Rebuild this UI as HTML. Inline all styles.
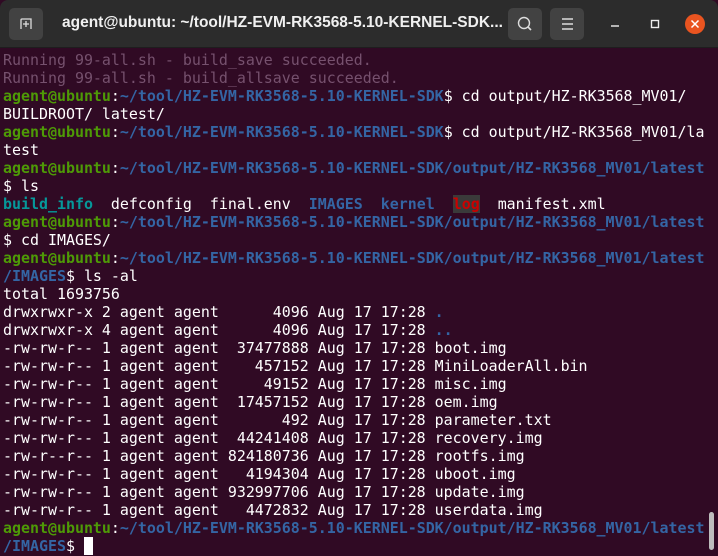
<!DOCTYPE html>
<html><head><meta charset="utf-8"><style>
*{margin:0;padding:0;box-sizing:border-box}
body{width:718px;height:556px;background:#300a24;overflow:hidden;position:relative;font-family:"Liberation Sans",sans-serif}
.tb{position:absolute;left:0;top:0;width:718px;height:48px;background:#2c2c2c;border-radius:8px 8px 0 0;border-bottom:1px solid #1e1e1e}
.btn{position:absolute;top:8px;width:34px;height:32px;background:#424242;border-radius:5px}
.title{position:absolute;left:62px;top:14px;color:#f0f0f0;font-weight:bold;font-size:15.5px;white-space:nowrap}
pre{position:absolute;left:3px;top:51px;font-family:"DejaVu Sans Mono","Liberation Mono",monospace;font-size:14.95px;line-height:18px;color:#fff}
.g{color:#4e9a06;font-weight:bold}.b{color:#3465a4;font-weight:bold}.d{color:#76516e}
.c{color:#06989a;font-weight:bold}.r{color:#cc0000;font-weight:bold;background:#3a3a3a}
.cur{background:#fff;color:#fff}
.sb{position:absolute;left:709px;top:512px;width:5px;height:38px;background:#bdbdbd;border-radius:3px}
</style></head><body>
<div class="tb">
<div class="btn" style="left:9px"><svg width="34" height="32"><path d="M12 21V12q0-1 1-1h9v10" fill="none" stroke="#ddd" stroke-width="1.3"/><path d="M17 13v6M14 16h6" stroke="#ddd" stroke-width="1.3"/></svg></div>
<div class="title">agent@ubuntu: ~/tool/HZ-EVM-RK3568-5.10-KERNEL-SDK...</div>
<div class="btn" style="left:508px"><svg width="34" height="32"><circle cx="16" cy="15" r="5.5" fill="none" stroke="#ddd" stroke-width="1.4"/><path d="M20 19l3 3" stroke="#ddd" stroke-width="1.6"/></svg></div>
<div class="btn" style="left:550px"><svg width="34" height="32"><path d="M12 11h11M12 16h11M12 21h11" stroke="#ddd" stroke-width="1.4"/></svg></div>
<svg style="position:absolute;left:600px;top:14px" width="118" height="22"><path d="M11 12h8" stroke="#eee" stroke-width="1.4"/><rect x="51.5" y="6.5" width="7" height="7" fill="none" stroke="#eee" stroke-width="1.4"/><circle cx="95" cy="10" r="10" fill="#e95420"/><path d="M91.5 6.5l7 7M98.5 6.5l-7 7" stroke="#fff" stroke-width="1.5"/></svg>
</div>
<pre><span class="d">Running 99-all.sh - build_save succeeded.
Running 99-all.sh - build_allsave succeeded.</span>
<span class="g">agent@ubuntu</span>:<span class="b">~/tool/HZ-EVM-RK3568-5.10-KERNEL-SDK</span>$ cd output/HZ-RK3568_MV01/
BUILDROOT/ latest/
<span class="g">agent@ubuntu</span>:<span class="b">~/tool/HZ-EVM-RK3568-5.10-KERNEL-SDK</span>$ cd output/HZ-RK3568_MV01/la
test
<span class="g">agent@ubuntu</span>:<span class="b">~/tool/HZ-EVM-RK3568-5.10-KERNEL-SDK/output/HZ-RK3568_MV01/latest</span>
$ ls
<span class="c">build_info</span>  defconfig  final.env  <span class="b">IMAGES</span>  <span class="b">kernel</span>  <span class="r">log</span>  manifest.xml
<span class="g">agent@ubuntu</span>:<span class="b">~/tool/HZ-EVM-RK3568-5.10-KERNEL-SDK/output/HZ-RK3568_MV01/latest</span>
$ cd IMAGES/
<span class="g">agent@ubuntu</span>:<span class="b">~/tool/HZ-EVM-RK3568-5.10-KERNEL-SDK/output/HZ-RK3568_MV01/latest</span>
<span class="b">/IMAGES</span>$ ls -al
total 1693756
drwxrwxr-x 2 agent agent      4096 Aug 17 17:28 <span class="b">.</span>
drwxrwxr-x 4 agent agent      4096 Aug 17 17:28 <span class="b">..</span>
-rw-rw-r-- 1 agent agent  37477888 Aug 17 17:28 boot.img
-rw-rw-r-- 1 agent agent    457152 Aug 17 17:28 MiniLoaderAll.bin
-rw-rw-r-- 1 agent agent     49152 Aug 17 17:28 misc.img
-rw-rw-r-- 1 agent agent  17457152 Aug 17 17:28 oem.img
-rw-rw-r-- 1 agent agent       492 Aug 17 17:28 parameter.txt
-rw-rw-r-- 1 agent agent  44241408 Aug 17 17:28 recovery.img
-rw-r--r-- 1 agent agent 824180736 Aug 17 17:28 rootfs.img
-rw-rw-r-- 1 agent agent   4194304 Aug 17 17:28 uboot.img
-rw-rw-r-- 1 agent agent 932997706 Aug 17 17:28 update.img
-rw-rw-r-- 1 agent agent   4472832 Aug 17 17:28 userdata.img
<span class="g">agent@ubuntu</span>:<span class="b">~/tool/HZ-EVM-RK3568-5.10-KERNEL-SDK/output/HZ-RK3568_MV01/latest</span>
<span class="b">/IMAGES</span>$ <span class="cur">_</span></pre>
<div class="sb"></div>
</body></html>
